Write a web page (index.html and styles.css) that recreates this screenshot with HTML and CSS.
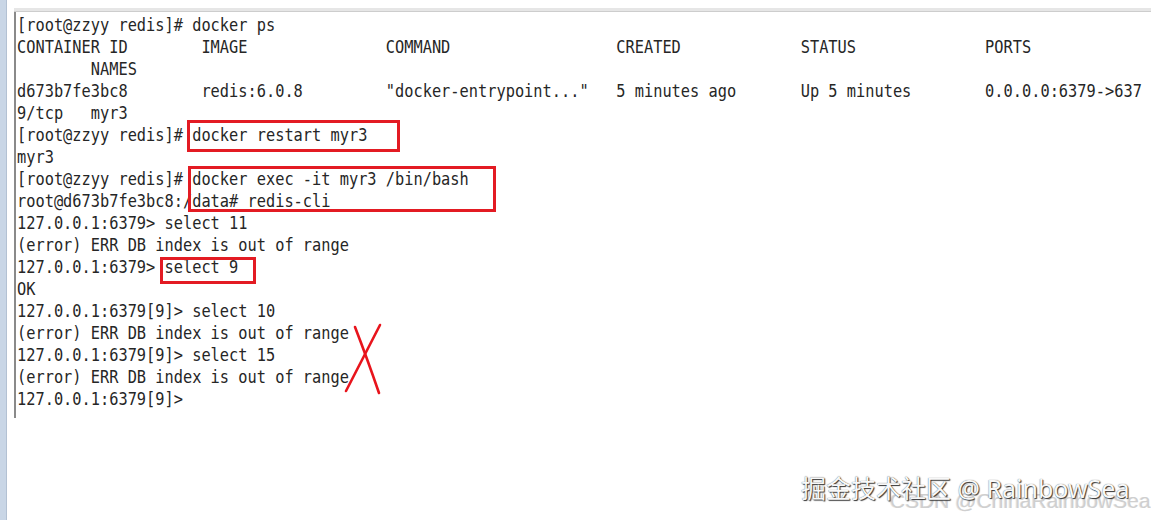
FILE: index.html
```html
<!DOCTYPE html>
<html lang="zh-CN">
<head>
<meta charset="utf-8">
<title>docker redis select</title>
<link rel="stylesheet" href="styles.css">
</head>
<body>
<div class="screen">
  <div class="side-strip"></div>
  <div class="main">
    <div class="top-rule"></div>
    <div class="terminal">
<pre class="term-text">[root@zzyy redis]# docker ps
CONTAINER ID        IMAGE               COMMAND                  CREATED             STATUS              PORTS
        NAMES
d673b7fe3bc8        redis:6.0.8         "docker-entrypoint..."   5 minutes ago       Up 5 minutes        0.0.0.0:6379->637
9/tcp   myr3
[root@zzyy redis]# docker restart myr3
myr3
[root@zzyy redis]# docker exec -it myr3 /bin/bash
root@d673b7fe3bc8:/data# redis-cli
127.0.0.1:6379> select 11
(error) ERR DB index is out of range
127.0.0.1:6379> select 9
OK
127.0.0.1:6379[9]> select 10
(error) ERR DB index is out of range
127.0.0.1:6379[9]> select 15
(error) ERR DB index is out of range
127.0.0.1:6379[9]></pre>
    </div>
  </div>

  <div class="mark mark-restart"></div>
  <div class="mark mark-exec"></div>
  <div class="mark mark-select"></div>

  <svg class="cross" width="48" height="80" viewBox="0 0 48 80" aria-hidden="true">
    <path d="M15 7 Q 27 38 39 73" />
    <path d="M40 5 Q 23 38 6 71" />
  </svg>

  <span class="wm-csdn">CSDN @ChinaRainbowSea</span>
  <span class="wm-juejin">掘金技术社区 @ RainbowSea</span>
</div>
</body>
</html>
```

FILE: styles.css
```css
* {
  box-sizing: border-box;
}

html, body {
  margin: 0;
  padding: 0;
  background: #ffffff;
}

body {
  font-family: "DejaVu Sans Mono", monospace;
  overflow: hidden;
}

.screen {
  position: relative;
  display: flex;
  width: 1151px;
  height: 520px;
  overflow: hidden;
  background: #ffffff;
}

.side-strip {
  flex: 0 0 7px;
  height: 100%;
  background: #c9d6e6;
  border-right: 1px solid #b3c1d3;
}

.main {
  flex: 1 1 auto;
  padding-left: 7px;
  padding-top: 8px;
}

.top-rule {
  height: 4px;
  background: #e6e6e6;
  border-bottom: 1px solid #cdcdcd;
}

.terminal {
  border-left: 2px solid #8a8a8a;
  padding: 2px 0 8px 1px;
}

.term-text {
  margin: 0;
  font-family: "DejaVu Sans Mono", monospace;
  font-size: 18px;
  line-height: 22px;
  color: #262626;
  white-space: pre;
  transform: scaleX(0.8508);
  transform-origin: 0 0;
}

.mark {
  position: absolute;
  border: 3px solid #e31b23;
}

.mark-restart {
  left: 187px;
  top: 120px;
  width: 213px;
  height: 32px;
}

.mark-exec {
  left: 188px;
  top: 166px;
  width: 308px;
  height: 46px;
}

.mark-select {
  left: 160px;
  top: 257px;
  width: 96px;
  height: 27px;
}

.cross {
  position: absolute;
  left: 340px;
  top: 320px;
}

.cross path {
  fill: none;
  stroke: #e8141c;
  stroke-width: 2.6;
  stroke-linecap: round;
}

.wm-csdn {
  position: absolute;
  left: 890px;
  top: 490px;
  font-family: "Liberation Sans", Arial, sans-serif;
  font-size: 21px;
  line-height: 1;
  color: #cfcfcf;
  text-shadow: 1px 1px 0 #ffffff, -1px 0 0 #e6e6e6;
  white-space: nowrap;
}

.wm-juejin {
  position: absolute;
  left: 801px;
  top: 476px;
  font-family: "Noto Sans", "Noto Sans CJK SC", sans-serif;
  font-size: 25px;
  line-height: 1;
  color: #f8f8f8;
  text-shadow: 1px 1px 1px #333333, 0 0 1px #555555;
  white-space: nowrap;
}
```
